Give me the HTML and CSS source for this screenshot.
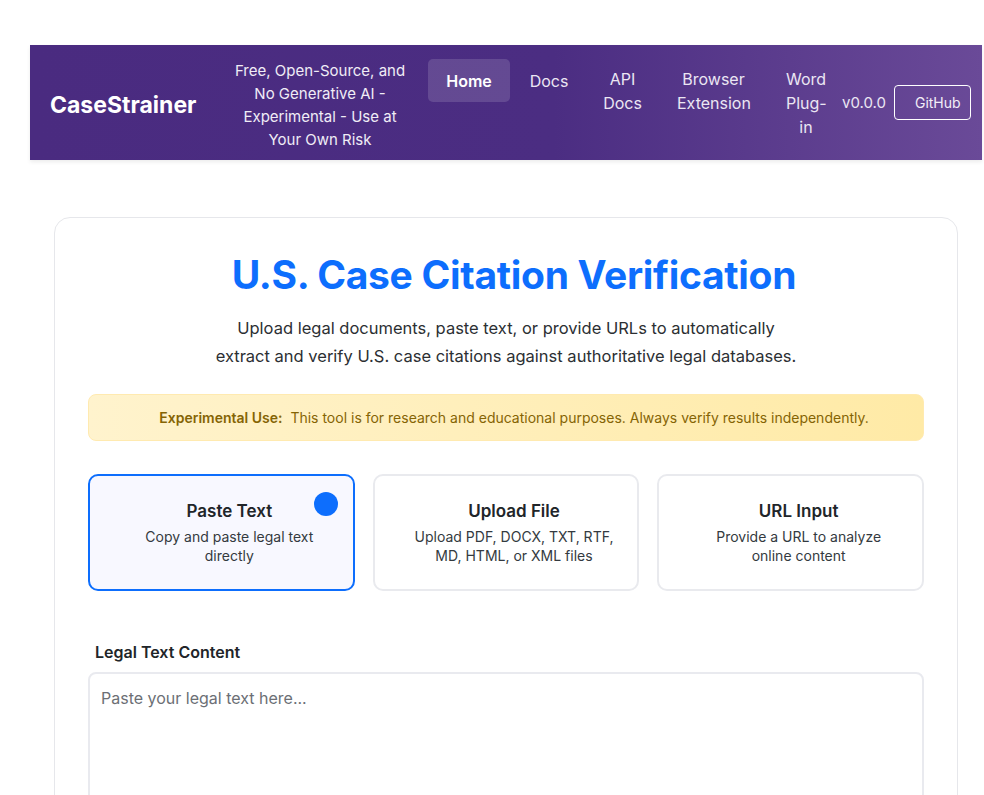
FILE: index.html
```html
<!DOCTYPE html>
<html lang="en">
<head>
<meta charset="utf-8">
<title>CaseStrainer</title>
<link rel="stylesheet" href="styles.css">
</head>
<body>
<header class="topbar">
  <div class="brand">CaseStrainer</div>
  <div class="tagline">Free, Open-Source, and No Generative AI - Experimental - Use at Your Own Risk</div>
  <nav class="nav">
    <a class="nav-link active w-home">Home</a>
    <a class="nav-link w-docs">Docs</a>
    <a class="nav-link multi w-api">API Docs</a>
    <a class="nav-link multi w-ext">Browser Extension</a>
    <a class="nav-link multi w-word">Word Plug-in</a>
  </nav>
  <span class="version">v0.0.0</span>
  <a class="gh-btn">GitHub</a>
</header>

<main class="card">
  <h1 class="title">U.S. Case Citation Verification</h1>
  <p class="subtitle">Upload legal documents, paste text, or provide URLs to automatically<br>extract and verify U.S. case citations against authoritative legal databases.</p>

  <div class="alert"><strong>Experimental Use:</strong>&nbsp; This tool is for research and educational purposes. Always verify results independently.</div>

  <div class="modes">
    <div class="mode active">
      <span class="dot"></span>
      <div class="mode-title">Paste Text</div>
      <div class="mode-desc">Copy and paste legal text directly</div>
    </div>
    <div class="mode">
      <div class="mode-title">Upload File</div>
      <div class="mode-desc">Upload PDF, DOCX, TXT, RTF, MD, HTML, or XML files</div>
    </div>
    <div class="mode">
      <div class="mode-title">URL Input</div>
      <div class="mode-desc">Provide a URL to analyze online content</div>
    </div>
  </div>

  <label class="field-label">Legal Text Content</label>
  <textarea class="text-input" placeholder="Paste your legal text here..."></textarea>
</main>
</body>
</html>
```

FILE: styles.css
```css
html, body {
  margin: 0;
  padding: 0;
  background: #ffffff;
  font-family: Inter, "Noto Sans", sans-serif;
  overflow: hidden;
}

body {
  padding: 45px 2px 0 30px;
}

.topbar {
  display: flex;
  align-items: center;
  height: 115px;
  padding: 14px 12px 9px 20px;
  background: linear-gradient(90deg, #4a2b80 0%, #4b2d82 55%, #6a4a98 100%);
  box-shadow: 0 2px 4px rgba(0, 0, 0, 0.08);
  color: #ffffff;
  box-sizing: border-box;
}

.brand {
  flex: none;
  font-size: 23px;
  font-weight: 700;
  width: 178px;
}

.tagline {
  flex: none;
  width: 184px;
  text-align: center;
  font-size: 15px;
  line-height: 23px;
  color: #f0ecf6;
  margin-right: 16px;
}

.nav {
  display: flex;
  align-items: flex-start;
  align-self: stretch;
}

.nav-link {
  display: block;
  flex: none;
  box-sizing: border-box;
  padding: 10px 0 9px;
  font-size: 16px;
  line-height: 24px;
  color: #ebe6f3;
  text-align: center;
  border-radius: 5px;
}

.nav-link.multi { padding-top: 8px; padding-left: 20px; padding-right: 20px; }

.nav-link.active {
  background: rgba(255, 255, 255, 0.14);
  color: #ffffff;
  font-weight: 600;
}

.w-home { width: 82px; }
.w-docs { width: 78px; }
.nav-link.w-api { width: 69px; padding-left: 15px; padding-right: 15px; }
.w-ext { width: 113px; }
.nav-link.w-word { width: 72px; padding-left: 16px; padding-right: 16px; }

.version {
  flex: none;
  font-size: 15px;
  color: #ebe6f3;
  margin: -5px 8px 0 0;
}

.gh-btn {
  display: block;
  flex: none;
  margin-top: -5px;
  border: 1px solid #ffffff;
  border-radius: 4px;
  padding: 8px 9px 8px 20px;
  font-size: 14px;
  line-height: 17px;
  color: #f2eef8;
}

.card {
  margin: 57px 24px 0 24px;
  border: 1px solid #e6e7eb;
  border-radius: 16px;
  padding: 32px 33px 40px;
  background: #fff;
}

.title {
  margin: 0;
  padding-left: 16px;
  text-align: center;
  font-size: 39px;
  line-height: 50px;
  font-weight: 700;
  color: #0d6efd;
  letter-spacing: -0.3px;
}

.subtitle {
  margin: 14px 0 0;
  text-align: center;
  font-size: 16.5px;
  line-height: 28px;
  color: #2c2f33;
}

.alert {
  margin-top: 24px;
  height: 47px;
  display: flex;
  align-items: center;
  justify-content: center;
  padding-left: 16px;
  background: linear-gradient(90deg, #fff3cd 0%, #ffeaa6 100%);
  border: 1px solid #ffeab0;
  border-radius: 8px;
  font-size: 14px;
  color: #856404;
  box-sizing: border-box;
}

.alert strong { font-weight: 600; }

.modes {
  display: grid;
  grid-template-columns: 1fr 1fr 1fr;
  gap: 18px;
  margin-top: 33px;
}

.mode {
  position: relative;
  height: 117px;
  box-sizing: border-box;
  border: 2px solid #e9eaee;
  border-radius: 10px;
  padding: 24px 22px 0 38px;
  text-align: center;
  background: #fff;
}

.mode.active {
  border-color: #0d6efd;
  background: #f8f8ff;
}

.dot {
  position: absolute;
  top: 16px;
  right: 15px;
  width: 24px;
  height: 24px;
  border-radius: 50%;
  background: #0d6efd;
}

.mode-title {
  font-size: 17px;
  font-weight: 600;
  line-height: 22px;
  color: #212529;
}

.mode-desc {
  margin-top: 5px;
  font-size: 14px;
  line-height: 19px;
  color: #343a40;
}

.field-label {
  display: block;
  margin: 51px 0 0 7px;
  font-size: 16px;
  font-weight: 600;
  color: #212529;
}

.text-input {
  display: block;
  width: 100%;
  box-sizing: border-box;
  height: 200px;
  margin-top: 10px;
  border: 2px solid #e9eaef;
  border-radius: 8px;
  padding: 13px 11px;
  font-family: Inter, "Noto Sans", sans-serif;
  font-size: 16px;
  line-height: 22px;
  resize: none;
  background: #fff;
}

.text-input::placeholder { color: #6c6f75; }
```
